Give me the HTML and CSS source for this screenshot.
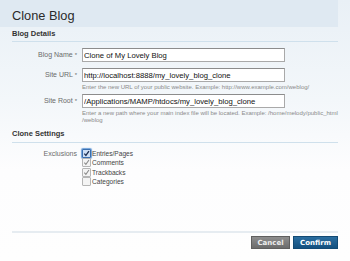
FILE: index.html
```html
<!DOCTYPE html>
<html lang="en">
<head>
    <meta charset="UTF-8">
    <title>Clone Blog</title>
    <link rel="stylesheet" href="styles.css">
</head>
<body>
    <div class="page">
        <div class="page-header">
            <h1>Clone Blog</h1>
        </div>

        <div class="content">
            <h2 class="section-title">Blog Details</h2>

            <div class="field">
                <label class="field-label">Blog Name <span class="req">*</span></label>
                <div class="field-body">
                    <input class="text" type="text" value="Clone of My Lovely Blog">
                </div>
            </div>

            <div class="field with-hint">
                <label class="field-label">Site URL <span class="req">*</span></label>
                <div class="field-body">
                    <input class="text" type="text" value="http://localhost:8888/my_lovely_blog_clone">
                    <p class="hint">Enter the new URL of your public website. Example: http://www.example.com/weblog/</p>
                </div>
            </div>

            <div class="field with-hint">
                <label class="field-label">Site Root <span class="req">*</span></label>
                <div class="field-body">
                    <input class="text" type="text" value="/Applications/MAMP/htdocs/my_lovely_blog_clone">
                    <p class="hint">Enter a new path where your main index file will be located. Example: /home/melody/public_html<br>/weblog</p>
                </div>
            </div>

            <h2 class="section-title settings">Clone Settings</h2>

            <div class="field">
                <label class="field-label plain">Exclusions</label>
                <ul class="checks">
                    <li><span class="box focused"><svg viewBox="0 0 8 8"><path d="M1.5 4.2 L3.3 6.2 L6.8 1.2" /></svg></span>Entries/Pages</li>
                    <li><span class="box"><svg viewBox="0 0 8 8"><path d="M1.5 4.2 L3.3 6.2 L6.8 1.2" /></svg></span>Comments</li>
                    <li><span class="box"><svg viewBox="0 0 8 8"><path d="M1.5 4.2 L3.3 6.2 L6.8 1.2" /></svg></span>Trackbacks</li>
                    <li><span class="box empty"></span>Categories</li>
                </ul>
            </div>

            <div class="actions">
                <button class="btn cancel">Cancel</button>
                <button class="btn confirm">Confirm</button>
            </div>
        </div>
    </div>
</body>
</html>
```

FILE: styles.css
```css
body {
    margin: 0;
    font-family: "Liberation Sans", Arial, sans-serif;
    color: #333;
    background: linear-gradient(#e9f0f6 0px, #f3f7fa 100px, #fdfdfe 170px, #fefefe 261px);
    height: 261px;
    overflow: hidden;
}

.page {
    width: 338px;
}

.page-header {
    background-color: #dfe9f2;
    height: 27px;
    padding: 0 12px;
    overflow: hidden;
}

h1 {
    margin: 8px 0 0;
    font-size: 12.8px;
    font-weight: normal;
    line-height: 16px;
    color: #2b2b2b;
}

.content {
    padding: 0 0 0 12px;
}

.section-title {
    margin: 0;
    padding: 2px 0 3px;
    font-size: 7.5px;
    line-height: 9px;
    font-weight: bold;
    color: #333;
    border-bottom: 1px solid #cfe0ec;
}

.section-title.settings {
    margin-top: 3px;
    padding-bottom: 4px;
}

.field {
    display: flex;
    gap: 5px;
    margin-top: 6px;
}

.field.with-hint + .field {
    margin-top: 3px;
}

.field-label {
    width: 65px;
    flex: none;
    text-align: right;
    font-size: 7px;
    line-height: 14px;
    color: #6b6b6b;
}

.field-label.plain {
    line-height: 9px;
}

.req {
    font-size: 6px;
}

.field-body {
    flex: 1;
}

.text {
    display: block;
    box-sizing: border-box;
    width: 203px;
    height: 14px;
    margin: 0;
    padding: 0 1px;
    border: 1px solid #a9a9a9;
    border-top-color: #8c8c8c;
    background: #fff;
    font-family: "Liberation Sans", Arial, sans-serif;
    font-size: 7.7px;
    color: #111;
}

.hint {
    margin: 2px 0 0;
    font-size: 6px;
    line-height: 7px;
    color: #8a8a8a;
}

.checks {
    list-style: none;
    margin: 0;
    padding: 0;
}

.checks li {
    display: flex;
    align-items: center;
    gap: 1px;
    height: 9.3px;
    font-size: 6.6px;
    color: #444;
}

.box {
    width: 7px;
    height: 7px;
    border: 1px solid #b5b5b5;
    border-radius: 1px;
    background: #f4f4f4;
    display: flex;
}

.box svg {
    width: 7px;
    height: 7px;
    fill: none;
    stroke: #8a8a8a;
    stroke-width: 1.2;
}

.box.focused {
    border-color: #3a6fb0;
    background: #cfe0f5;
    box-shadow: 0 0 1px 1px #6fa0d8;
}

.box.focused svg {
    stroke: #1d2f52;
    stroke-width: 1.5;
}

.actions {
    margin-top: 45px;
    border-top: 2px solid #e6ecf1;
    padding-top: 3px;
    display: flex;
    justify-content: flex-end;
    gap: 3px;
}

.btn {
    height: 13px;
    padding: 0;
    border: 1px solid #555;
    font-family: "DejaVu Sans", Verdana, sans-serif;
    font-size: 7px;
    font-weight: bold;
    color: #fff;
    cursor: pointer;
}

.cancel {
    width: 39px;
    background: linear-gradient(#8e8e8e, #6c6c6c);
    border-color: #5f5f5f;
    color: #eee;
}

.confirm {
    width: 45px;
    background: linear-gradient(#2a6da0, #14517f);
    border-color: #124a74;
}
```
